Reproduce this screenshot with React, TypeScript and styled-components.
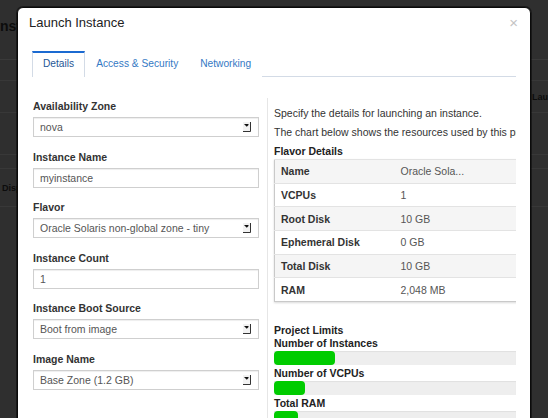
import React from "react";
import styled, { createGlobalStyle } from "styled-components";

const GlobalStyle = createGlobalStyle`
  html, body { margin: 0; padding: 0; background: #2f2f2f; }
  body { font-family: "Liberation Sans", Arial, Helvetica, sans-serif; overflow: hidden; }
  * { box-sizing: border-box; }
`;

const Screen = styled.div`
  position: relative;
  width: 548px;
  height: 418px;
  overflow: hidden;
  background: #2f2f2f;
`;

/* ---------- dimmed page behind the modal ---------- */
const Backdrop = styled.div`
  display: flex;
  flex-direction: column;
  width: 100%;
  height: 100%;
  color: #0c0c0c;
`;

const BackdropTitle = styled.h1`
  margin: 0 0 0 -4px;
  height: 60px;
  padding-top: 19px;
  font-size: 14px;
  line-height: 14px;
  font-weight: bold;
  border-bottom: 1px solid #3a3a3a;
`;

const BackdropRow = styled.div<{ $h: number; $pad?: number }>`
  height: ${(p) => p.$h}px;
  padding-left: ${(p) => p.$pad ?? 0}px;
  border-bottom: 1px solid #383838;
  display: flex;
  align-items: center;
  white-space: nowrap;
  font-size: 9px;
  font-weight: bold;
`;

/* ---------- modal ---------- */
const Modal = styled.div`
  position: absolute;
  left: 17px;
  top: 7px;
  width: 514px;
  height: 430px;
  background: #fff;
  border: 1px solid #0b0b0b;
  border-radius: 6px 6px 0 0;
  box-shadow: 0 0 0 1px rgba(0, 0, 0, 0.45);
  display: flex;
  flex-direction: column;
`;

const ModalHeader = styled.div`
  height: 43px;
  padding: 7px 12px 0 11px;
  display: flex;
  justify-content: space-between;
  align-items: flex-start;
`;

const ModalTitle = styled.h3`
  margin: 0;
  font-size: 13px;
  line-height: 16px;
  font-weight: normal;
  color: #222;
`;

const CloseButton = styled.span`
  font-size: 15px;
  line-height: 16px;
  color: #c4c4c4;
  cursor: pointer;
`;

const TabBar = styled.div`
  margin: 0 14px;
  height: 26px;
  display: flex;
  border-bottom: 1px solid #d3dbe6;
`;

const Tab = styled.div<{ $active?: boolean }>`
  height: 26px;
  padding: 0 10px 2px;
  line-height: 22px;
  font-size: 10.2px;
  border-top: 2px solid ${(p) => (p.$active ? "#1b6ad1" : "transparent")};
  border-left: 1px solid ${(p) => (p.$active ? "#d3dbe6" : "transparent")};
  border-right: 1px solid ${(p) => (p.$active ? "#d3dbe6" : "transparent")};
  background: #fff;
  color: ${(p) => (p.$active ? "#1f5796" : "#3479c4")};
  white-space: nowrap;
`;

const Body = styled.div`
  flex: 1;
  display: flex;
  padding: 21px 14px 0 15px;
  min-height: 0;
`;

const FormColumn = styled.div`
  width: 226px;
  flex: none;
  padding-top: 2px;
`;

const FieldGroup = styled.div`
  margin-bottom: 13.5px;
`;

const FieldLabel = styled.label`
  display: block;
  font-size: 10.5px;
  line-height: 13px;
  font-weight: bold;
  color: #333;
  margin-bottom: 4px;
`;

const boxCss = `
  width: 100%;
  height: 20px;
  border: 1px solid #cfcfcf;
  box-shadow: inset 0 1px 1px rgba(0,0,0,0.07);
  font-family: "Liberation Sans", Arial, sans-serif;
  font-size: 10.5px;
  color: #555;
  background: #fff;
`;

const SelectBox = styled.div`
  ${boxCss}
  padding: 0 7px 0 6px;
  display: flex;
  align-items: center;
  justify-content: space-between;
  white-space: nowrap;
`;

const TextInput = styled.input`
  ${boxCss}
  display: block;
  padding: 0 6px;
  outline: none;
  margin: 0;
`;

const InfoColumn = styled.div`
  width: 249px;
  flex: none;
  margin-left: 8px;
  border-left: 1px solid #e6e6e6;
  padding: 9px 0 0 6px;
  overflow: hidden;
`;

const InfoText = styled.p<{ $mb: number }>`
  margin: 0 0 ${(p) => p.$mb}px;
  font-size: 10.5px;
  line-height: 13px;
  color: #333;
  white-space: nowrap;
`;

const SectionTitle = styled.h4`
  margin: 0 0 1px;
  font-size: 10.5px;
  line-height: 13px;
  font-weight: bold;
  color: #222;
`;

const DetailsTable = styled.table`
  width: 290px;
  border-collapse: collapse;
  border: 1px solid #c9c9c9;
  box-shadow: 0 1px 2px rgba(0, 0, 0, 0.15);
  font-size: 10.5px;
`;

const DetailRow = styled.tr<{ $striped: boolean }>`
  background: ${(p) => (p.$striped ? "#f5f5f5" : "#fff")};
`;

const DetailKey = styled.td`
  width: 126px;
  height: 23.7px;
  padding: 0 6px;
  font-weight: bold;
  color: #333;
  border-top: 1px solid #e3e3e3;
  white-space: nowrap;
`;

const DetailValue = styled.td`
  height: 23.7px;
  padding: 0;
  color: #555;
  border-top: 1px solid #e3e3e3;
  white-space: nowrap;
`;

const LimitsBlock = styled.div`
  margin-top: 22px;
`;

const LimitLabel = styled.div`
  font-size: 10.5px;
  line-height: 13px;
  font-weight: bold;
  color: #222;
  white-space: nowrap;
`;

const BarTrack = styled.div`
  height: 14px;
  margin: 1px 0 2px;
  width: 100%;
  background: #eeeeee;
  box-shadow: inset 0 1px 1px rgba(0, 0, 0, 0.06);
`;

const BarFill = styled.div`
  height: 100%;
  background: #00cc00;
  border-radius: 4px;
`;

const SelectArrow = () => (
  <svg width="8" height="10" viewBox="0 0 8 10" aria-hidden="true">
    <rect x="0" y="0" width="7" height="9" fill="#f2f2f2" />
    <path d="M7.5 0 V9.5 H0" stroke="#333" strokeWidth="1" fill="none" />
    <rect x="1.5" y="2" width="4" height="1" fill="#111" />
    <polygon points="2,3 5.5,3 3.75,4.8" fill="#111" />
  </svg>
);

const fields: { label: string; value: string; kind: "select" | "input" }[] = [
  { label: "Availability Zone", value: "nova", kind: "select" },
  { label: "Instance Name", value: "myinstance", kind: "input" },
  { label: "Flavor", value: "Oracle Solaris non-global zone - tiny", kind: "select" },
  { label: "Instance Count", value: "1", kind: "input" },
  { label: "Instance Boot Source", value: "Boot from image", kind: "select" },
  { label: "Image Name", value: "Base Zone (1.2 GB)", kind: "select" },
];

const flavor: [string, string][] = [
  ["Name", "Oracle Sola..."],
  ["VCPUs", "1"],
  ["Root Disk", "10 GB"],
  ["Ephemeral Disk", "0 GB"],
  ["Total Disk", "10 GB"],
  ["RAM", "2,048 MB"],
];

const limits: { label: string; width: number }[] = [
  { label: "Number of Instances", width: 61 },
  { label: "Number of VCPUs", width: 31 },
  { label: "Total RAM", width: 24 },
];

export default function App() {
  return (
    <>
      <GlobalStyle />
      <Screen>
        <Backdrop>
          <BackdropTitle>Instances</BackdropTitle>
          <BackdropRow $h={21} />
          <BackdropRow $h={32} $pad={532}>Launch Instance</BackdropRow>
          <BackdropRow $h={42} />
          <BackdropRow $h={14} />
          <BackdropRow $h={38} $pad={2}>Displaying 1 item</BackdropRow>
        </Backdrop>
        <Modal>
          <ModalHeader>
            <ModalTitle>Launch Instance</ModalTitle>
            <CloseButton>×</CloseButton>
          </ModalHeader>
          <TabBar>
            <Tab $active>Details</Tab>
            <Tab>Access &amp; Security</Tab>
            <Tab>Networking</Tab>
          </TabBar>
          <Body>
            <FormColumn>
              {fields.map((f) => (
                <FieldGroup key={f.label}>
                  <FieldLabel>{f.label}</FieldLabel>
                  {f.kind === "select" ? (
                    <SelectBox>
                      <span>{f.value}</span>
                      <SelectArrow />
                    </SelectBox>
                  ) : (
                    <TextInput readOnly defaultValue={f.value} />
                  )}
                </FieldGroup>
              ))}
            </FormColumn>
            <InfoColumn>
              <InfoText $mb={5.5}>Specify the details for launching an instance.</InfoText>
              <InfoText $mb={6.5}>
                The chart below shows the resources used by this project in relation to the project's quotas.
              </InfoText>
              <SectionTitle>Flavor Details</SectionTitle>
              <DetailsTable>
                <tbody>
                  {flavor.map(([k, v], i) => (
                    <DetailRow key={k} $striped={i % 2 === 0}>
                      <DetailKey>{k}</DetailKey>
                      <DetailValue>{v}</DetailValue>
                    </DetailRow>
                  ))}
                </tbody>
              </DetailsTable>
              <LimitsBlock>
                <LimitLabel>Project Limits</LimitLabel>
                {limits.map((l) => (
                  <div key={l.label}>
                    <LimitLabel>{l.label}</LimitLabel>
                    <BarTrack>
                      <BarFill style={{ width: `${l.width}px` }} />
                    </BarTrack>
                  </div>
                ))}
              </LimitsBlock>
            </InfoColumn>
          </Body>
        </Modal>
      </Screen>
    </>
  );
}
